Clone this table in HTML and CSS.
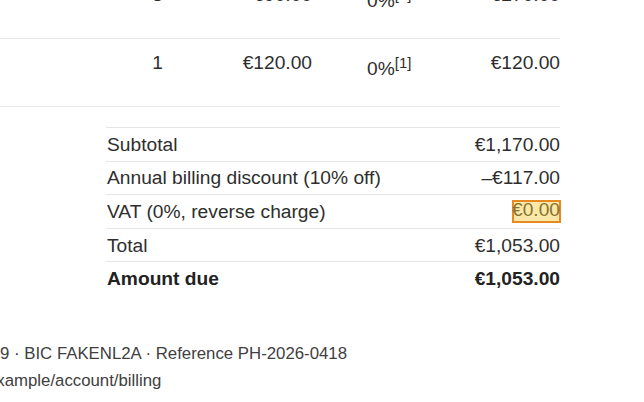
FILE: index.html
```html
<!DOCTYPE html>
<html lang="en">
<head>
<meta charset="utf-8">
<title>Invoice</title>
<link rel="stylesheet" href="styles.css">
</head>
<body>
<main class="invoice">
  <section class="items">
    <div class="row">
      <div class="cell desc"></div>
      <div class="cell qty">3</div>
      <div class="cell price">€90.00</div>
      <div class="cell vat">0%<sup>[1]</sup></div>
      <div class="cell amt">€270.00</div>
    </div>
    <div class="row">
      <div class="cell desc"></div>
      <div class="cell qty">1</div>
      <div class="cell price">€120.00</div>
      <div class="cell vat">0%<sup>[1]</sup></div>
      <div class="cell amt">€120.00</div>
    </div>
  </section>

  <section class="summary">
    <div class="sum-row"><span>Subtotal</span><span>€1,170.00</span></div>
    <div class="sum-row"><span>Annual billing discount (10% off)</span><span>–€117.00</span></div>
    <div class="sum-row"><span>VAT (0%, reverse charge)</span><span class="hl">€0.00</span></div>
    <div class="sum-row"><span>Total</span><span>€1,053.00</span></div>
    <div class="sum-row due"><span>Amount due</span><span>€1,053.00</span></div>
  </section>

  <footer class="foot">
    <p class="foot-line first">9 · BIC FAKENL2A · Reference PH-2026-0418</p>
    <p class="foot-line second">example/account/billing</p>
  </footer>
</main>
</body>
</html>
```

FILE: styles.css
```css
html, body {
  margin: 0;
  padding: 0;
  background: #ffffff;
}

body {
  width: 644px;
  height: 402px;
  overflow: hidden;
  font-family: "Liberation Sans", Arial, Helvetica, sans-serif;
  color: #2e2e2e;
}

.invoice {
  width: 560px;
  margin-top: -29px;
}

.items .row {
  display: grid;
  grid-template-columns: 120px 75px 117px 128px 120px;
  height: 68px;
  box-sizing: border-box;
  padding-top: 12px;
  border-bottom: 1px solid #e8e8e8;
  align-items: start;
  font-size: 19.2px;
  line-height: 23px;
}

.cell.qty { text-align: center; }
.cell.price { text-align: right; }
.cell.vat { padding-left: 55px; }
.cell.amt { text-align: right; }

.cell.vat sup {
  font-size: 0.78em;
}

.summary {
  margin: 20px 0 0 106px;
  font-size: 19.2px;
  line-height: 23px;
}

.sum-row {
  display: flex;
  justify-content: space-between;
  border-top: 1px solid #e6e6e6;
  padding: 4.8px 0 4.8px 1px;
}

.sum-row.due {
  font-weight: bold;
  color: #222;
}

.hl {
  display: inline-block;
  line-height: 19px;
  margin-right: -1px;
  padding: 0 1px 0 0;
  background: #fbe8a8;
  box-shadow: inset 0 0 0 2px #e88a22;
  color: #86732c;
}

.foot {
  margin-top: 46px;
  font-size: 16.8px;
  line-height: 26.9px;
  color: #404040;
}

.foot-line {
  margin: 0;
  white-space: nowrap;
}

.foot-line.second {
  margin-left: -13px;
}
```
